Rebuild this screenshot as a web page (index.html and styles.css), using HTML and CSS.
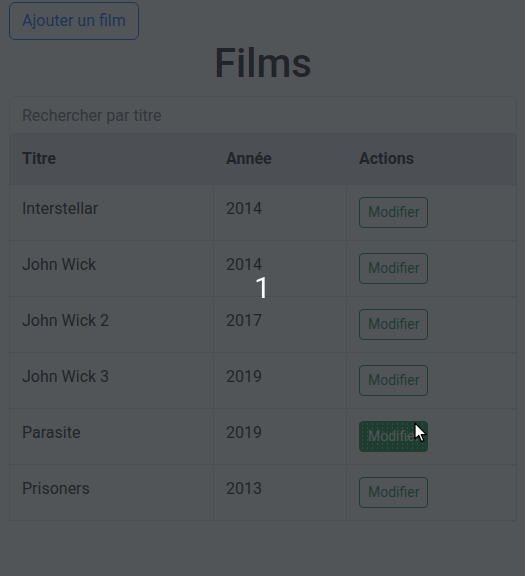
FILE: index.html
```html
<!DOCTYPE html>
<html lang="fr">
<head>
<meta charset="utf-8">
<title>Films</title>
<link rel="stylesheet" href="styles.css">
</head>
<body>
<div class="app">
  <div class="toolbar">
    <button class="btn btn-outline-primary">Ajouter un film</button>
  </div>
  <h1 class="title">Films</h1>
  <input class="search" type="text" placeholder="Rechercher par titre">
  <table class="films">
    <colgroup>
      <col class="col-title">
      <col class="col-year">
      <col class="col-actions">
    </colgroup>
    <thead>
      <tr><th>Titre</th><th>Année</th><th>Actions</th></tr>
    </thead>
    <tbody>
      <tr><td>Interstellar</td><td>2014</td><td><button class="btn-sm">Modifier</button></td></tr>
      <tr><td>John Wick</td><td>2014</td><td><button class="btn-sm">Modifier</button></td></tr>
      <tr><td>John Wick 2</td><td>2017</td><td><button class="btn-sm">Modifier</button></td></tr>
      <tr><td>John Wick 3</td><td>2019</td><td><button class="btn-sm">Modifier</button></td></tr>
      <tr><td>Parasite</td><td>2019</td><td><button class="btn-sm is-hover">Modifier</button></td></tr>
      <tr><td>Prisoners</td><td>2013</td><td><button class="btn-sm">Modifier</button></td></tr>
    </tbody>
  </table>
</div>
<div class="backdrop"><span class="counter">1</span></div>
<svg class="cursor" width="14" height="22" viewBox="0 0 14 22" aria-hidden="true">
  <path d="M1 1 L1 17 L4.8 13.4 L7.4 19.6 L9.8 18.6 L7.2 12.6 L12.4 12.6 Z" fill="#fff" stroke="#000" stroke-width="1.2" stroke-linejoin="round"/>
</svg>
</body>
</html>
```
FILE: styles.css
```css
* { box-sizing: border-box; }

html, body {
  margin: 0;
  background: #ffffff;
  font-family: Roboto, "Liberation Sans", sans-serif;
  color: #212529;
}

.app {
  padding: 2px 8px 0 9px;
}

.toolbar {
  display: flex;
}

.btn {
  font-family: inherit;
  font-size: 16px;
  line-height: 24px;
  padding: 6px 12px;
  border-radius: 6px;
  background: transparent;
  cursor: pointer;
}

.btn-outline-primary {
  color: #0d6efd;
  border: 1px solid #0d6efd;
}

.title {
  margin: 0 0 8px;
  font-size: 40px;
  line-height: 48px;
  font-weight: 500;
  text-align: center;
}

.search {
  display: block;
  width: 100%;
  height: 38px;
  padding: 6px 12px;
  font-family: inherit;
  font-size: 16px;
  line-height: 24px;
  color: #212529;
  border: 1px solid #dee2e6;
  border-radius: 6px;
}

.search::placeholder {
  color: #6c757d;
}

.films {
  width: 100%;
  border-collapse: collapse;
  border: 1px solid #dee2e6;
  font-size: 16px;
  line-height: 24px;
}

.col-title { width: 204px; }
.col-year { width: 133px; }

.films th,
.films td {
  padding: 12px;
  border: 1px solid #dee2e6;
  text-align: left;
  vertical-align: top;
}

.films th {
  padding-bottom: 13px;
  font-weight: 700;
  background: #e5e8eb;
}

.btn-sm {
  display: inline-block;
  vertical-align: top;
  font-family: inherit;
  font-size: 14px;
  line-height: 21px;
  padding: 4px 8px;
  border-radius: 4px;
  color: #198754;
  background: transparent;
  border: 1px solid #198754;
}

.btn-sm.is-hover {
  color: #ffffff;
  background-color: #198754;
  background-image: radial-gradient(circle, #3cff5a 0.7px, transparent 1px);
  background-size: 5px 4px;
}

.backdrop {
  position: fixed;
  inset: 0;
  background: rgba(33, 37, 41, 0.78);
  display: flex;
  align-items: center;
  justify-content: center;
}

.counter {
  color: #ffffff;
  font-size: 29px;
  line-height: 34px;
  font-weight: 400;
}

.cursor {
  position: fixed;
  left: 414px;
  top: 422px;
}
```
